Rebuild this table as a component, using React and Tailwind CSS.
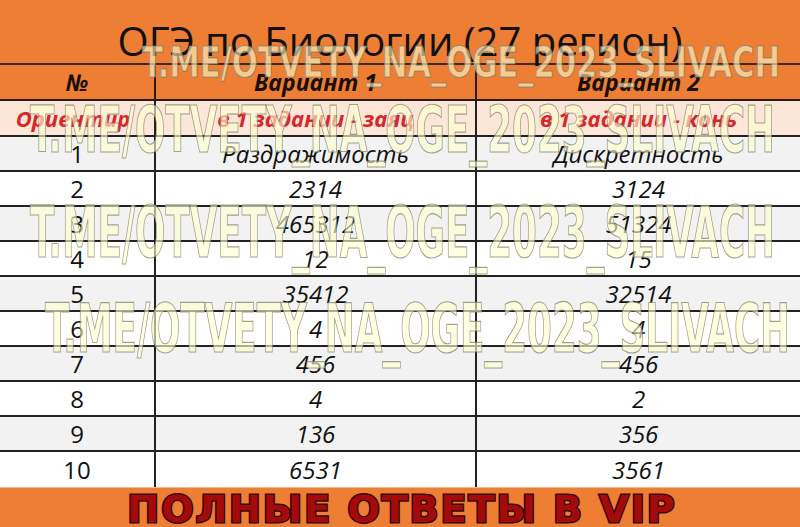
import React from 'react';

const rows = [
    { n: '1', a: 'Раздражимость', b: 'Дискретность' },
    { n: '2', a: '2314', b: '3124' },
    { n: '3', a: '465312', b: '51324' },
    { n: '4', a: '12', b: '15' },
    { n: '5', a: '35412', b: '32514' },
    { n: '6', a: '4', b: '4' },
    { n: '7', a: '456', b: '456' },
    { n: '8', a: '4', b: '2' },
    { n: '9', a: '136', b: '356' },
    { n: '10', a: '6531', b: '3561' },
];

const marks = [
    { x: 142, y: 77, len: 638, size: 43 },
    { x: 30, y: 152, len: 745, size: 64 },
    { x: 30, y: 257, len: 745, size: 71 },
    { x: 45, y: 352, len: 745, size: 68 },
];

const App = () => {
    return (
        <div className="relative w-[800px] h-[527px] overflow-hidden bg-white text-[#111] font-['Open_Sans','Liberation_Sans',sans-serif]">
            {/* Title */}
            <div className="h-[65px] bg-[#EE7E34] border-b-2 border-[#3b2a1e] flex items-center justify-center">
                <h1 className="text-[40px] font-medium leading-none pt-[18px]">ОГЭ по Биологии (27 регион)</h1>
            </div>

            {/* Header */}
            <div className="grid grid-cols-[156px_321px_1fr] h-[36px] bg-[#EE7E34] border-b-2 border-[#2a1c14] text-[23px] font-bold italic text-[#1a1008]">
                <div className="border-r-2 border-[#2a1c14] flex items-center justify-center">№</div>
                <div className="border-r-2 border-[#2a1c14] flex items-center justify-center">Вариант 1</div>
                <div className="flex items-center justify-center">Вариант 2</div>
            </div>

            {/* Orientation */}
            <div className="grid grid-cols-[156px_321px_1fr] h-[36px] bg-[#FCE6D8] border-b-2 border-[#222] text-[22px] font-bold italic text-[#D8262B]">
                <div className="border-r-2 border-[#222] flex items-center justify-center pr-2">Ориентир</div>
                <div className="border-r-2 border-[#222] flex items-center justify-center">в 1 задании - заяц</div>
                <div className="flex items-center justify-center">в 1 задании - конь</div>
            </div>

            {/* Data rows */}
            {rows.map((r, i) => (
                <div
                    key={r.n}
                    className={`grid grid-cols-[156px_321px_1fr] h-[35px] text-[24px] ${i % 2 === 0 ? 'bg-[#F2F2F2]' : 'bg-white'} ${i < rows.length - 1 ? 'border-b-2 border-[#222]' : ''}`}
                >
                    <div className="border-r-2 border-[#222] flex items-center justify-center leading-none">{r.n}</div>
                    <div className="border-r-2 border-[#222] flex items-center justify-center italic leading-none">{r.a}</div>
                    <div className="flex items-center justify-center italic leading-none">{r.b}</div>
                </div>
            ))}

            {/* Footer */}
            <div className="h-[42px] bg-[#EE7E34] border-t border-[#f6b78b] flex items-center justify-center pl-[4px]">
                <span className="font-['DejaVu_Sans',sans-serif] font-bold text-[38px] leading-none tracking-[2px] text-[#A50A0A] [-webkit-text-stroke:3px_#3a0606] [paint-order:stroke_fill]">
                    ПОЛНЫЕ ОТВЕТЫ В VIP
                </span>
            </div>

            {/* Watermarks */}
            <svg className="absolute inset-0 pointer-events-none" width="800" height="527">
                {marks.map((m, i) => (
                    <text
                        key={i}
                        x={m.x}
                        y={m.y}
                        textLength={m.len}
                        lengthAdjust="spacingAndGlyphs"
                        fontSize={m.size}
                        fontWeight="bold"
                        fontFamily="'DejaVu Sans Condensed','DejaVu Sans',sans-serif"
                        fill="#FFFFD0"
                        fillOpacity="0.62"
                        stroke="#7c7b68"
                        strokeOpacity="0.7"
                        strokeWidth="1.2"
                    >
                        T.ME/OTVETY_NA_OGE_2023_SLIVACH
                    </text>
                ))}
            </svg>
        </div>
    );
};

export default App;
